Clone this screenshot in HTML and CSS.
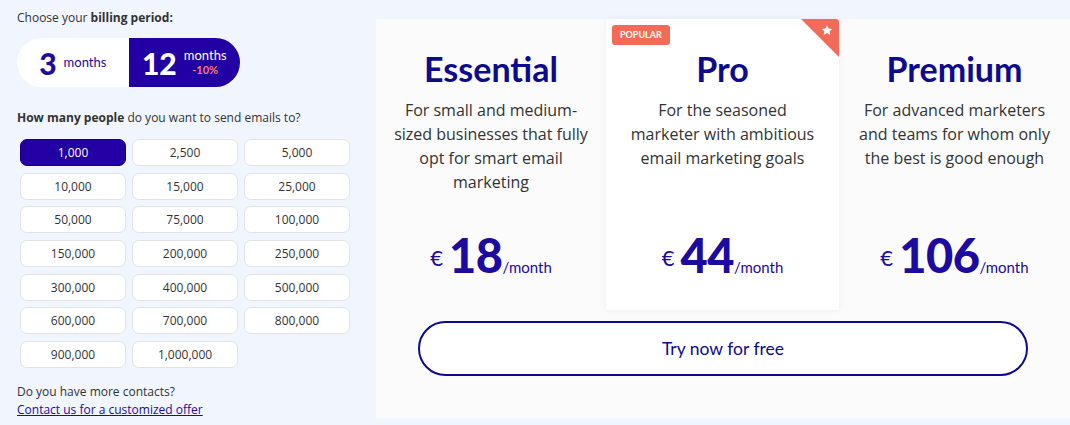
FILE: index.html
```html
<!DOCTYPE html>
<html lang="en">
<head>
<meta charset="utf-8">
<title>Pricing</title>
<link rel="stylesheet" href="styles.css">
</head>
<body>
<div class="page">
  <aside class="config">
    <p class="label">Choose your <b>billing period:</b></p>
    <div class="toggle">
      <div class="opt opt-left"><span class="num">3</span><span class="unit">months</span></div>
      <div class="opt opt-right active"><span class="num">12</span><span class="unit-stack"><span class="unit">months</span><span class="disc">-10%</span></span></div>
    </div>
    <p class="label label-people"><b>How many people</b> do you want to send emails to?</p>
    <div class="grid">
      <button class="chip selected">1,000</button>
      <button class="chip">2,500</button>
      <button class="chip">5,000</button>
      <button class="chip">10,000</button>
      <button class="chip">15,000</button>
      <button class="chip">25,000</button>
      <button class="chip">50,000</button>
      <button class="chip">75,000</button>
      <button class="chip">100,000</button>
      <button class="chip">150,000</button>
      <button class="chip">200,000</button>
      <button class="chip">250,000</button>
      <button class="chip">300,000</button>
      <button class="chip">400,000</button>
      <button class="chip">500,000</button>
      <button class="chip">600,000</button>
      <button class="chip">700,000</button>
      <button class="chip">800,000</button>
      <button class="chip">900,000</button>
      <button class="chip">1,000,000</button>
    </div>
    <p class="more">Do you have more contacts?</p>
    <a class="link" href="#">Contact us for a customized offer</a>
  </aside>
  <main class="plans">
    <div class="cards">
      <section class="card">
        <h2 class="title">Essential</h2>
        <p class="desc">For small and medium-<br>sized businesses that fully<br>opt for smart email<br>marketing</p>
        <div class="price"><span class="cur">€</span><span class="amount">18</span><span class="per">/month</span></div>
      </section>
      <section class="card card-pro">
        <span class="badge">POPULAR</span>
        <span class="ribbon"><svg viewBox="0 0 38 38" width="38" height="38"><path d="M0 0 H35 A3 3 0 0 1 38 3 V38 Z" fill="#f26b58"/><path d="M26 6.2 L27.6 9.6 L31.2 10 L28.5 12.4 L29.3 16 L26 14.1 L22.7 16 L23.5 12.4 L20.8 10 L24.4 9.6 Z" fill="#fff"/></svg></span>
        <h2 class="title">Pro</h2>
        <p class="desc">For the seasoned<br>marketer with ambitious<br>email marketing goals</p>
        <div class="price"><span class="cur">€</span><span class="amount">44</span><span class="per">/month</span></div>
      </section>
      <section class="card">
        <h2 class="title">Premium</h2>
        <p class="desc">For advanced marketers<br>and teams for whom only<br>the best is good enough</p>
        <div class="price"><span class="cur">€</span><span class="amount">106</span><span class="per">/month</span></div>
      </section>
    </div>
    <div class="cta-wrap"><button class="cta">Try now for free</button></div>
  </main>
</div>
</body>
</html>
```
FILE: styles.css
```css
* { box-sizing: border-box; }
html, body { margin: 0; padding: 0; }
body {
  background: #f1f5fe;
  font-family: "Open Sans", "Noto Sans", sans-serif;
  color: #333;
  width: 1070px;
  height: 425px;
  overflow: hidden;
}
.page {
  display: flex;
  align-items: flex-start;
  padding-top: 19px;
}
.config {
  width: 376px;
  padding-left: 17px;
}
.label {
  margin: -10px 0 0;
  font-size: 12px;
  line-height: 18px;
  color: #333;
}
.label b { font-weight: 700; }
.toggle {
  display: flex;
  margin-top: 11px;
  width: 223px;
  height: 49px;
}
.opt {
  flex: 1;
  display: flex;
  align-items: center;
  justify-content: center;
  font-family: "Lato", sans-serif;
  gap: 7px;
}
.opt-left {
  background: #fff;
  border-radius: 25px 0 0 25px;
  color: #1d0b99;
}
.opt-right {
  background: #2300a3;
  border-radius: 0 25px 25px 0;
  color: #fff;
}
.num { font-size: 30px; font-weight: 900; line-height: 1; }
.unit { font-size: 13px; line-height: 15px; }
.unit-stack { display: flex; flex-direction: column; align-items: center; margin-top: -2px; }
.disc { color: #ff7b6a; font-size: 11px; line-height: 13px; font-weight: 700; }
.label-people { margin-top: 22px; }
.grid {
  display: grid;
  grid-template-columns: repeat(3, 106px);
  column-gap: 6px;
  row-gap: 6.7px;
  margin-top: 12px;
  margin-left: 3px;
}
.chip {
  height: 27px;
  background: #fff;
  border: 1px solid #e2e3e8;
  border-radius: 7px;
  font-family: "Open Sans", sans-serif;
  font-size: 12px;
  color: #333;
  padding: 0;
}
.chip.selected {
  background: #2300a3;
  border-color: #1a0080;
  color: #fff;
}
.more {
  margin: 15px 0 0;
  font-size: 12px;
  line-height: 18px;
}
.link {
  display: block;
  margin-top: 0;
  font-size: 12px;
  line-height: 18px;
  color: #1d0a9e;
  text-decoration: underline;
}
.plans {
  flex: 1;
  height: 399px;
  background: #fbfbfc;
  display: flex;
  flex-direction: column;
}
.cards {
  display: grid;
  grid-template-columns: 230px 233px 231px;
  height: 291px;
}
.card {
  position: relative;
  text-align: center;
  padding: 28px 8px 0;
  display: flex;
  flex-direction: column;
  align-items: center;
}
.card-pro {
  background: #fff;
  box-shadow: 0 0 6px rgba(0, 0, 0, 0.06);
  z-index: 1;
}
.title {
  margin: 0;
  font-family: "Lato", sans-serif;
  font-weight: 700;
  font-size: 34px;
  line-height: 44px;
  color: #0d0a8c;
}
.desc {
  margin: 7px 0 0;
  font-size: 16px;
  line-height: 24px;
  color: #333;
  height: 96px;
  white-space: nowrap;
}
.price {
  margin-top: 38px;
  display: flex;
  align-items: baseline;
  font-family: "Lato", sans-serif;
  color: #1d0a9e;
}
.cur { font-size: 22px; position: relative; top: -7px; margin-right: 6px; }
.amount { font-size: 47px; font-weight: 900; line-height: 1; letter-spacing: -0.5px; }
.per { font-size: 15px; }
.badge {
  position: absolute;
  left: 6px;
  top: 6px;
  background: #f26b58;
  color: #fff;
  font-family: "Lato", sans-serif;
  font-size: 9px;
  font-weight: 700;
  line-height: 20px;
  padding: 0 8px;
  border-radius: 3px;
}
.ribbon {
  position: absolute;
  right: 0;
  top: 0;
  width: 38px;
  height: 38px;
  line-height: 0;
}
.cta-wrap {
  display: flex;
  justify-content: center;
  padding-top: 11px;
}
.cta {
  width: 610px;
  height: 55px;
  background: #fff;
  border: 2px solid #0d0a8c;
  border-radius: 28px;
  font-family: "Lato", sans-serif;
  font-size: 17.5px;
  color: #0d0a8c;
}
```
